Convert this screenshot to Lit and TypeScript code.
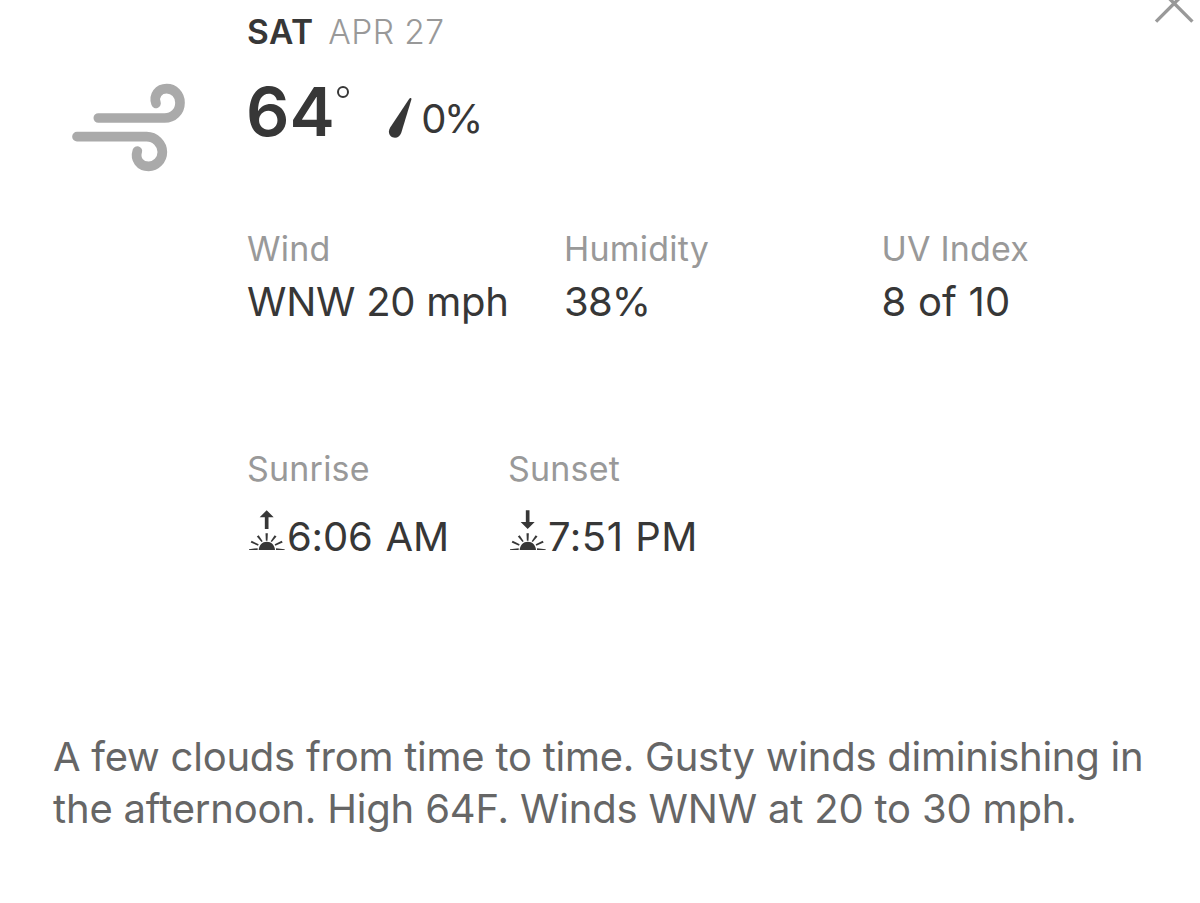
import { LitElement, css, html, svg } from "lit";
import { customElement, property } from "lit/decorators.js";

/**
 * A label with a value below it.
 */
@customElement("weather-detail")
class WeatherDetail extends LitElement {
    @property({ type: String })
    public label = "";

    public static styles = css`
        :host {
            display: block;
            white-space: nowrap;
        }

        .label {
            font-size: 34px;
            line-height: 40px;
            letter-spacing: 0.2px;
            color: #999;
        }

        .value {
            display: flex;
            align-items: flex-start;
            margin-top: var(--value-gap, 9px);
            font-size: 40px;
            line-height: 48px;
            letter-spacing: var(--value-spacing, 0.2px);
            word-spacing: var(--value-word-spacing, 0);
            color: #373737;
        }
    `;

    protected render() {
        return html`
            <div class="label">${this.label}</div>
            <div class="value"><slot></slot></div>
        `;
    }
}

/**
 * The half sun on the horizon, with an arrow for its direction.
 */
@customElement("sun-icon")
class SunIcon extends LitElement {
    @property({ type: String })
    public direction: "up" | "down" = "up";

    public static styles = css`
        :host {
            display: block;
            width: 40px;
            height: 48px;
        }

        svg {
            display: block;
            margin-top: -4px;
            fill: #373737;
        }
    `;

    protected render() {
        const arrow =
            this.direction === "up"
                ? svg`<path d="M65 16L86 37H70.5V72H59.5V37H44Z" />`
                : svg`<path d="M59.5 16H70.5V51H86L65 72L44 51H59.5Z" />`;

        return html`
            <svg width="40" height="44" viewBox="6 12 120 132">
                ${arrow}
                <path d="M41 135C42 120 52 110 65.5 110C79 110 89 120 90 135Z" />
                <path d="M61.5 85H68.5L67.5 107H62.5Z" />
                <path d="M35.5 94.5L41 91L53 108.5L49.5 111Z" />
                <path d="M94.5 94.5L89 91L77 108.5L80.5 111Z" />
                <path d="M17 112.5L20 107.5L41 118L39 122Z" />
                <path d="M113 112.5L110 107.5L89 118L91 122Z" />
                <path d="M12 132.5L38 129.5V135H12Z" />
                <path d="M119 132.5L93 129.5V135H119Z" />
            </svg>
        `;
    }
}

/**
 * Daily forecast panel.
 */
@customElement("app-root")
class AppRoot extends LitElement {
    public static styles = css`
        * {
            box-sizing: border-box;
        }

        :host {
            display: block;
            height: 903px;
            overflow: hidden;
            background: #fff;
            color: #373737;
            font-family: Inter, "Liberation Sans", sans-serif;
        }

        .header {
            display: grid;
            grid-template-columns: 175px 1fr 46px;
            padding-left: 72px;
            height: 229px;
        }

        .wind-icon {
            display: block;
            margin-top: 80px;
        }

        .date {
            margin-top: 12px;
            font-size: 33.5px;
            line-height: 40px;
            color: #999;
            font-weight: 300;
            letter-spacing: 0.4px;
        }

        .day {
            margin-right: 5px;
            color: #373737;
            font-weight: 600;
            letter-spacing: 0.5px;
        }

        .current {
            display: flex;
            align-items: flex-start;
            margin-top: 23px;
        }

        .temperature {
            font-size: 68px;
            line-height: 72px;
            font-weight: 600;
            margin-left: -1px;
        }

        .degree {
            width: 12px;
            height: 12px;
            margin: 11px 0 0 2px;
            border: 2.5px solid #373737;
            border-radius: 50%;
        }

        .drop {
            margin: 22px 0 0 39.5px;
        }

        .chance {
            margin: 20px 0 0 9px;
            font-size: 40px;
            line-height: 48px;
            letter-spacing: -2.5px;
        }

        .close {
            display: block;
        }

        .conditions {
            display: grid;
            grid-template-columns: 317px 317.5px auto;
            padding-left: 247px;
            height: 220px;
        }

        .wind {
            --value-spacing: -0.27px;
        }

        .humidity {
            --value-spacing: -0.8px;
        }

        .sun {
            display: grid;
            grid-template-columns: 261px auto;
            justify-content: start;
            padding-left: 247px;
            height: 282px;
            --value-gap: 24px;
            --value-spacing: 0;
        }

        .sunrise {
            --value-spacing: -0.2px;
            --value-word-spacing: 2px;
        }

        .sunset {
            --value-spacing: 0.5px;
        }

        .summary {
            margin: 0;
            padding: 0 40px 0 53px;
            font-size: 40px;
            line-height: 52px;
            letter-spacing: -0.24px;
            color: #666;
            white-space: nowrap;
        }

        .last-line {
            letter-spacing: -0.18px;
        }
    `;

    protected render() {
        return html`
            <div class="header">
                <svg class="wind-icon" width="116" height="96" viewBox="66 30 348 288" fill="none" stroke="#aaa" stroke-width="29" stroke-linecap="round">
                    <path d="M145 144H344C370 144 390 124 390 98C390 74 372 56 350 56C326 56 310 76 318 100" />
                    <path d="M81 200H290C316 200 337 222 337 246C337 270 318 289 296 289C270 289 254 268 262 243" />
                </svg>
                <div>
                    <div class="date"><span class="day">SAT</span> APR 27</div>
                    <div class="current">
                        <div class="temperature">64</div>
                        <div class="degree"></div>
                        <svg class="drop" width="24" height="42" viewBox="0 0 24 42" fill="#373737">
                            <path d="M22.5 1C23.3 1 23.6 1.6 23.4 2.6L13.2 36C12 39.2 9.7 40.8 7 40.8C3.4 40.8 0.8 38 0.9 34.6C1 33.2 1.4 32 2.2 30.6L21.1 2C21.6 1.3 22 1 22.5 1Z" />
                        </svg>
                        <div class="chance">0%</div>
                    </div>
                </div>
                <svg class="close" width="40" height="24" viewBox="0 0 40 24" fill="none" stroke="#999" stroke-width="3.4">
                    <path d="M2 21.6L39.6 -16M38.4 21.6L0.8 -16" />
                </svg>
            </div>
            <div class="conditions">
                <weather-detail class="wind" label="Wind">WNW 20 mph</weather-detail>
                <weather-detail class="humidity" label="Humidity">38%</weather-detail>
                <weather-detail label="UV Index">8 of 10</weather-detail>
            </div>
            <div class="sun">
                <weather-detail class="sunrise" label="Sunrise"><sun-icon direction="up"></sun-icon>6:06 AM</weather-detail>
                <weather-detail class="sunset" label="Sunset"><sun-icon direction="down"></sun-icon>7:51 PM</weather-detail>
            </div>
            <p class="summary">
                A few clouds from time to time. Gusty winds diminishing in<br />
                <span class="last-line">the afternoon. High 64F. Winds WNW at 20 to 30 mph.</span>
            </p>
        `;
    }
}

declare global {
    interface HTMLElementTagNameMap {
        "weather-detail": WeatherDetail;
        "sun-icon": SunIcon;
        "app-root": AppRoot;
    }
}

export { AppRoot };
